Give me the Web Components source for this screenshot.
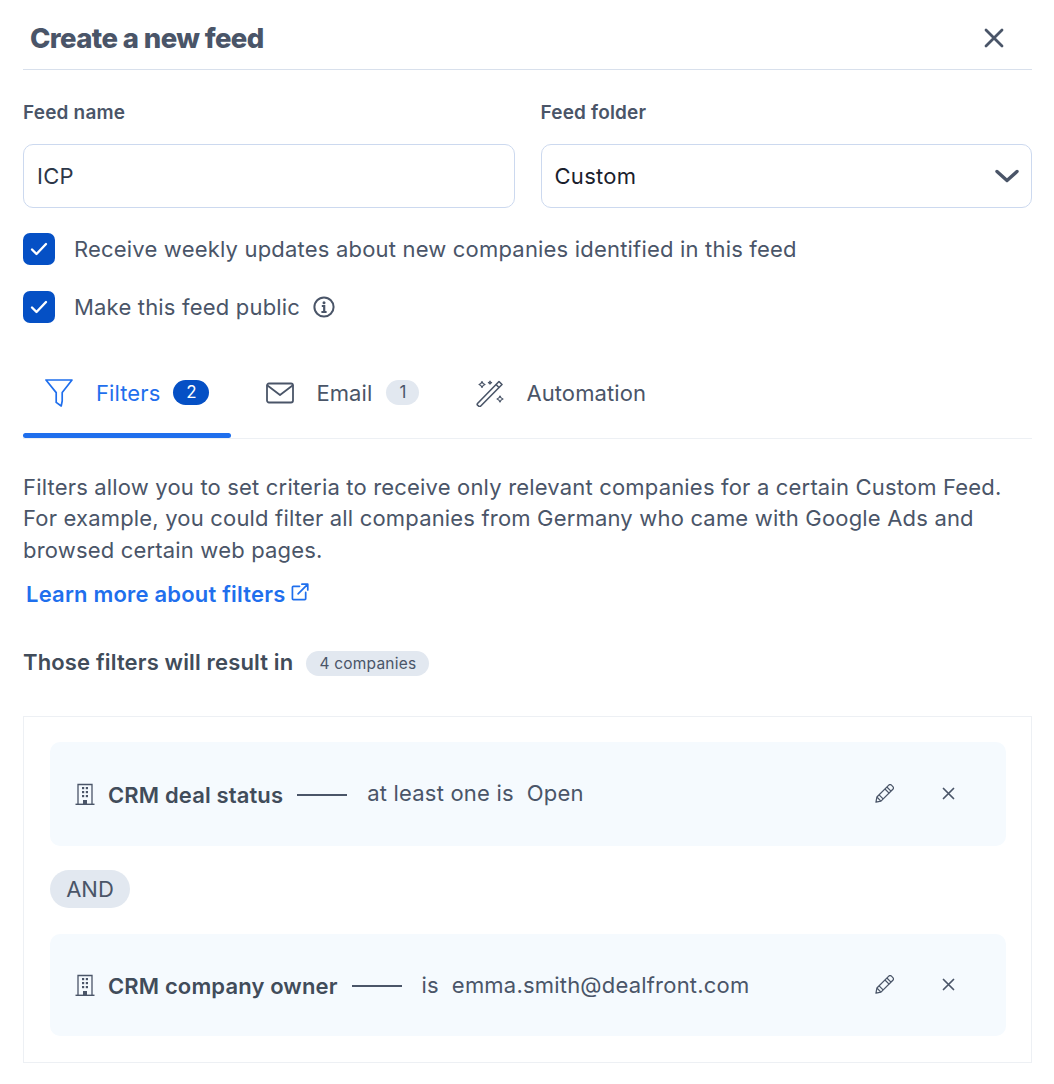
<!DOCTYPE html>
<html lang="en"><head><meta charset="utf-8"><title>Create a new feed</title>
<style>
html,body{margin:0;background:#fff}
body{font-family:Inter,"Noto Sans",sans-serif;color:#4a5568;-webkit-font-smoothing:antialiased}
</style></head><body>
<feed-dialog></feed-dialog>
<script>
const ICONS={
close:'<svg width="100%" height="100%" viewBox="0 0 24 24" fill="none" stroke="currentColor" stroke-width="2.8" stroke-linecap="round"><path d="M4 4l16 16M20 4L4 20"/></svg>',
info:'<svg width="22" height="22" viewBox="0 0 22 22" fill="none" stroke="#4a5568"><circle cx="11" cy="11" r="9.6" stroke-width="2"/><circle cx="11" cy="6.8" r="1.5" fill="#4a5568" stroke="none"/><path d="M8.8 10h2.4v6M8.4 16h5.2" stroke-width="2.2"/></svg>',
filter:'<svg width="28" height="28" viewBox="0 0 28 28" fill="none" stroke="currentColor" stroke-width="1.7" stroke-linejoin="round"><path d="M1 1h26L17.2 13.6V22l-1 5-5-3.6V13.6z"/></svg>',
mail:'<svg width="28" height="22" viewBox="0 0 28 22" fill="none" stroke="currentColor" stroke-width="1.8" stroke-linejoin="round" stroke-linecap="round"><rect x="1" y="1.5" width="26" height="19" rx="2"/><path d="M1.5 3.5 14 13 26.5 3.5"/></svg>',
wand:'<svg width="28" height="28" viewBox="0 0 28 28" fill="none" stroke="currentColor" stroke-width="1.6" stroke-linejoin="round"><path d="M1.5 24.5 23 2.500l3 3L4.500 27.200a1.200 1.200 0 0 1-1.700 0l-1.300-1a1.200 1.200 0 0 1 0-1.700z"/><path d="M20 5.500l3 3" /><path d="M6 2.500c.5 2 1 2.500 3 3-2 .5-2.500 1-3 3-.5-2-1-2.500-3-3 2-.5 2.500-1 3-3zM14 2c.2 1 .6 1.400 1.600 1.600-1 .2-1.400.6-1.600 1.600-.2-1-.6-1.400-1.600-1.600 1-.2 1.400-.6 1.600-1.600zM24 17c.5 2 1 2.500 3 3-2 .5-2.500 1-3 3-.5-2-1-2.500-3-3 2-.5 2.500-1 3-3z" stroke-width="1.200"/></svg>',
ext:'<svg width="18" height="18" viewBox="0 0 19 19" fill="none" stroke="currentColor" stroke-width="1.8" stroke-linecap="round" stroke-linejoin="round"><path d="M9 3.500H2.500a1 1 0 0 0-1 1V16.500a1 1 0 0 0 1 1H14.500a1 1 0 0 0 1-1V10"/><path d="M7.500 11.500 17.500 1.500M11.500 1.200h6.200v6.200"/></svg>',
building:'<svg width="20" height="22" viewBox="0 0 20 22" fill="none" stroke="#4a5568"><path d="M3 21V1.500h14V21" stroke-width="1.300"/><path d="M.5 21.300h19" stroke-width="1.400"/><path d="M8 21v-4h4v4" fill="#4a5568" stroke="none"/><g fill="#4a5568" stroke="none"><rect x="7" y="4" width="2.200" height="2.200"/><rect x="10.800" y="4" width="2.200" height="2.200"/><rect x="7" y="8" width="2.200" height="2.200"/><rect x="10.800" y="8" width="2.200" height="2.200"/><rect x="7" y="12" width="2.200" height="2.200"/><rect x="10.800" y="12" width="2.200" height="2.200"/></g></svg>',
pencil:'<svg width="19" height="19" viewBox="0 0 20 20" fill="none" stroke="#4a5568" stroke-width="1.300" stroke-linejoin="round"><path d="M14.500 1.200a2 2 0 0 1 2.800 0l1.500 1.500a2 2 0 0 1 0 2.800L6.300 18 1 19l1-5.300z"/><path d="M12.500 3.200l4.300 4.300M4.300 11.500l4.200 4.200M10.500 5.300l4.300 4.300M2.200 14l3.800 3.800"/></svg>'
};
function comp(tag,css,render){
  customElements.define(tag,class extends HTMLElement{
    connectedCallback(){
      if(this.shadowRoot)return;
      const r=this.attachShadow({mode:'open'});
      r.innerHTML='<style>'+css+'</style>'+render(this);
    }
  });
}
comp('feed-pill',`:host{display:inline-flex;align-items:center;justify-content:center;border-radius:999px;background:#e2e8f0;color:#4a5568;font-size:15px;line-height:1}
:host([variant=primary]){background:#0550c5;color:#fff}`,()=>'<slot></slot>');

comp('feed-header',`:host{display:flex;align-items:center;justify-content:space-between;height:69px;border-bottom:1px solid #d8e0ec;padding:0 26px 0 7px}
h1{margin:0;font:800 27.500px/1 Inter,sans-serif;letter-spacing:-.6px;color:#4a5568;position:relative;top:4px}
.x{width:24px;height:24px;color:#4a5568;position:relative;top:3px}`,
()=>`<h1><slot></slot></h1><div class="x">${ICONS.close}</div>`);

comp('feed-field',`:host{display:block;flex:1 1 0;min-width:0}
label{display:block;font:600 19px/22px Inter,sans-serif;letter-spacing:.18px;color:#4a5568;margin-bottom:20px}
.box{display:flex;align-items:center;justify-content:space-between;box-sizing:border-box;height:64px;border:1px solid #ccd9ef;border-radius:10px;padding:0 12px 0 13px;font:400 22px/1 Inter,sans-serif;color:#2d3748;letter-spacing:.3px}
:host([select]) .box{color:#1a202c}
svg{display:block}`,
h=>`<label>${h.getAttribute('label')}</label><div class="box"><span><slot></slot></span>${h.hasAttribute('select')?'<svg width="24" height="14" viewBox="0 0 24 14" fill="none" stroke="#4a5568" stroke-width="3.400" stroke-linecap="round" stroke-linejoin="round"><path d="M2 2.500l10 9 10-9"/></svg>':''}</div>`);

comp('feed-check',`:host{display:flex;align-items:center;gap:19px;height:32px;font:400 22px/1 Inter,sans-serif;color:#4a5568;letter-spacing:.19px}
.b{width:32px;height:32px;border-radius:7px;background:#0550c5;display:flex;align-items:center;justify-content:center;flex:none}
.t{display:flex;align-items:center;gap:13px}
svg{display:block}`,
()=>`<div class="b"><svg width="18" height="14" viewBox="0 0 18 14" fill="none" stroke="#fff" stroke-width="2.400" stroke-linecap="round" stroke-linejoin="round"><path d="M2 7.500l4.500 4.500L16 2"/></svg></div><div class="t"><slot></slot></div>`);

comp('feed-tab',`:host{display:flex;align-items:center;box-sizing:border-box;height:100%;color:#4a5568;font:400 22px/1 Inter,sans-serif;letter-spacing:.1px;padding:4px 22px 0}
:host([active]){color:#1f6fed;position:relative}
:host([active])::after{content:"";position:absolute;left:0;right:0;bottom:0;height:5px;border-radius:3px;background:#1f6fed}
.i{display:flex;margin-right:23px;width:28px;justify-content:center}
.l{margin-right:13px}
:host(:not([active])) .i{margin-right:22px}
:host(:not([active])) .l{margin-right:14px}
svg{display:block}`,
h=>`<span class="i">${ICONS[h.getAttribute('icon')]}</span><span class="l"><slot></slot></span><slot name="badge"></slot>`);

comp('feed-tabs',`:host{display:flex;gap:13px;height:94px;border-bottom:1px solid #edf0f4;align-items:stretch}`,()=>'<slot></slot>');

comp('feed-rule',`:host{display:flex;align-items:center;box-sizing:border-box;background:#f5fafe;border-radius:10px;padding:0 50px 0 25px;font:400 22px/1 Inter,sans-serif;color:#4a5568;letter-spacing:.2px}
.ic{display:flex;margin-right:13px}
b{font-weight:600;color:#414c5a;letter-spacing:.13px;position:relative;top:1px}
.dash{width:50px;height:2px;background:#4a5568;margin:0 20px 0 14px;flex:none;position:relative;top:1px}
.v{display:flex;gap:13px;flex:1}
.act{display:flex;align-items:center;gap:47px}
.act svg{display:block}
.x{width:15px;height:15px;color:#4a5568}
svg{display:block}`,
h=>`<span class="ic">${ICONS.building}</span><b>${h.getAttribute('name')}</b><span class="dash"></span><span class="v"><slot></slot></span><span class="act">${ICONS.pencil}<span class="x">${ICONS.close}</span></span>`);

comp('feed-dialog',`:host{display:block;width:1054px;height:1084px;box-sizing:border-box;padding:0 22px 0 23px;overflow:hidden}
.row{display:flex;gap:26px;margin-top:32px}
.checks{display:flex;flex-direction:column;gap:26px;margin-top:25px}
.tabs{margin-top:21px}
p{margin:32.700px 0 0;font:400 22px/31.500px Inter,sans-serif;color:#4a5568;letter-spacing:.18px}
a{display:flex;align-items:center;gap:5px;margin:12.400px 0 0 3px;font:600 22px/31px Inter,sans-serif;color:#1f6fed;text-decoration:none;letter-spacing:.2px}
a svg{display:block;position:relative;top:-2px}
.res{display:flex;align-items:center;gap:13px;margin-top:37px;font:600 22px/31px Inter,sans-serif;color:#414c5a;letter-spacing:.15px}
.res feed-pill{box-sizing:border-box;width:123px;height:25px;padding-top:1px;font-weight:400;font-size:15.500px;letter-spacing:.2px;position:relative;top:1px}
.box{box-sizing:border-box;height:347px;margin-top:38px;border:1px solid #edf0f4;padding:25px 25px 0 26px;display:flex;flex-direction:column;align-items:stretch}
.box feed-rule:nth-of-type(1){height:104px}
.box feed-rule:nth-of-type(1) span{position:relative;top:-1px}
.box feed-rule:nth-of-type(2){height:102px}
.and{align-self:flex-start;width:80px;height:38px;margin:24px 0 26px;font-size:22px;font-weight:400}
.info{display:flex}
.tc feed-pill{width:36px;height:25px;font-size:17px;flex:none;position:relative;top:-1px}
`,()=>`
<feed-header>Create a new feed</feed-header>
<div class="row">
  <feed-field label="Feed name">ICP</feed-field>
  <feed-field label="Feed folder" select>Custom</feed-field>
</div>
<div class="checks">
  <feed-check>Receive weekly updates about new companies identified in this feed</feed-check>
  <feed-check>Make this feed public <span class="info">${ICONS.info}</span></feed-check>
</div>
<feed-tabs class="tabs tc">
  <feed-tab icon="filter" active>Filters <feed-pill slot="badge" variant="primary">2</feed-pill></feed-tab>
  <feed-tab icon="mail">Email <feed-pill slot="badge" style="width:33px">1</feed-pill></feed-tab>
  <feed-tab icon="wand">Automation</feed-tab>
</feed-tabs>
<p>Filters allow you to set criteria to receive only relevant companies for a certain Custom Feed. For example, you could filter all companies from Germany who came with Google Ads and browsed certain web pages.</p>
<a href="#">Learn more about filters ${ICONS.ext}</a>
<div class="res">Those filters will result in <feed-pill>4 companies</feed-pill></div>
<div class="box">
  <feed-rule name="CRM deal status"><span>at least one is</span><span>Open</span></feed-rule>
  <feed-pill class="and">AND</feed-pill>
  <feed-rule name="CRM company owner"><span>is</span><span>emma.smith@dealfront.com</span></feed-rule>
</div>`);
</script>
</body></html>
